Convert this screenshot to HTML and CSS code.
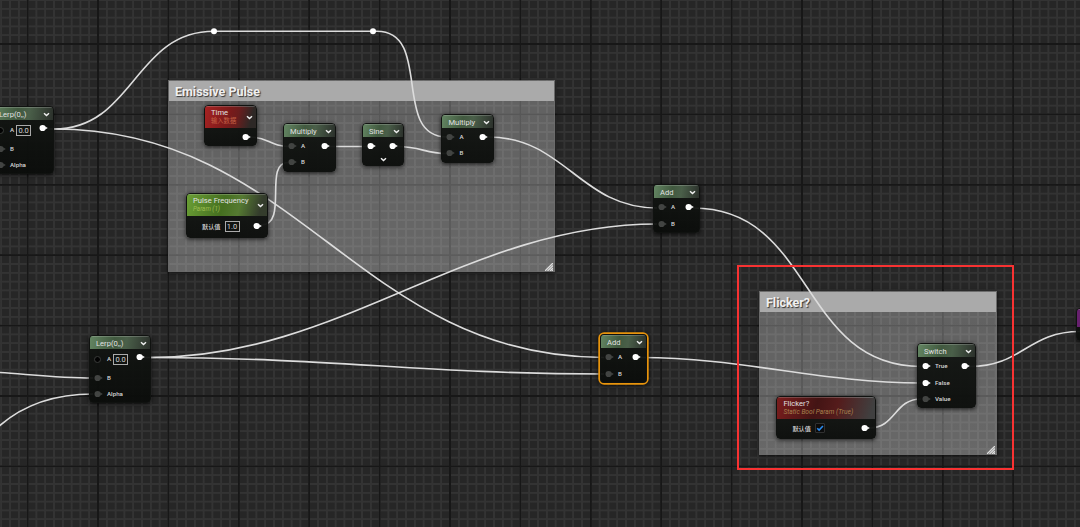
FILE: index.html
```html
<!DOCTYPE html>
<html lang="zh-CN">
<head>
    <meta charset="UTF-8">
    <meta name="viewport" content="width=device-width, initial-scale=1.0">
    <title>材质编辑器</title>
    <link rel="stylesheet" href="styles.css">
</head>
<body>
    <svg width="0" height="0" class="defs">
        <symbol id="pin" viewBox="0 0 10 8">
            <circle cx="3.6" cy="4" r="3.1"/>
            <path d="M6.2 2.4 8.8 4 6.2 5.6z"/>
        </symbol>
        <symbol id="chevron" viewBox="0 0 7 5">
            <path d="M1 1.2 3.5 3.5 6 1.2" fill="none" stroke="#eee" stroke-width="1.5"/>
        </symbol>
        <symbol id="grip" viewBox="0 0 8 8">
            <path d="M0 8 8 0M2.5 8 8 2.5M5 8 8 5M7 8 8 7" stroke="#ddd" stroke-width="1.3"/>
        </symbol>
    </svg>

    <div class="graph">
        <!-- 注释框 -->
        <section class="comment comment-pulse">
            <h2>Emissive Pulse</h2>
            <svg class="grip"><use href="#grip"/></svg>
        </section>
        <section class="comment comment-flicker">
            <h2>Flicker?</h2>
            <svg class="grip"><use href="#grip"/></svg>
        </section>

        <!-- 连线 -->
        <svg class="wires" width="1080" height="527">
            <path d="M48 129H54C134 129 134 31.3 214 31.3H377C433 31.3 391 137 447 137"/>
            <path d="M54 129C300 129 358 357.5 604 357.5"/>
            <path d="M144 357.5H151C341 357.5 467 224 657 224"/>
            <path d="M151 357.5C331 357.5 424 374 604 374"/>
            <path d="M0 372.5C30 374.5 60 378 93 378"/>
            <path d="M-5 430C25 401 62 394 93 394"/>
            <path d="M249 137C270 137 268 146.5 292 146.5"/>
            <path d="M261 225C289 225 263 162.5 288 162.5"/>
            <path d="M328 146.5H367"/>
            <path d="M397 146.5C422 146.5 424 153.5 447 153.5"/>
            <path d="M488 137C565 137 580 208 657 208"/>
            <path d="M693 208C815 208 799 366.5 921 366.5"/>
            <path d="M641 357.5C741 357.5 821 383 921 383"/>
            <path d="M869 428C896 428 894 399 921 399"/>
            <path d="M970 366.5C1022 366.5 1028 331.5 1080 331.5"/>
            <circle cx="214" cy="31.3" r="3"/>
            <circle cx="373" cy="31.3" r="3"/>
        </svg>

        <!-- 节点 -->
        <div class="node lerp lerp-top">
            <header><b>Lerp(0,,)</b><svg class="chevron"><use href="#chevron"/></svg></header>
            <div class="row"><i class="ring"></i><span>A</span><em>0.0</em><svg class="pin out"><use href="#pin"/></svg></div>
            <div class="row"><svg class="pin off"><use href="#pin"/></svg><span>B</span></div>
            <div class="row"><svg class="pin off"><use href="#pin"/></svg><span>Alpha</span></div>
        </div>

        <div class="node lerp lerp-bottom">
            <header><b>Lerp(0,,)</b><svg class="chevron"><use href="#chevron"/></svg></header>
            <div class="row"><i class="ring"></i><span>A</span><em>0.0</em><svg class="pin out"><use href="#pin"/></svg></div>
            <div class="row"><svg class="pin off"><use href="#pin"/></svg><span>B</span></div>
            <div class="row"><svg class="pin off"><use href="#pin"/></svg><span>Alpha</span></div>
        </div>

        <div class="node tall red time">
            <header><div><b>Time</b><small>输入数据</small></div><svg class="chevron"><use href="#chevron"/></svg></header>
            <div class="row"><svg class="pin out"><use href="#pin"/></svg></div>
        </div>

        <div class="node multiply-1">
            <header><b>Multiply</b><svg class="chevron"><use href="#chevron"/></svg></header>
            <div class="row"><svg class="pin off"><use href="#pin"/></svg><span>A</span><svg class="pin out"><use href="#pin"/></svg></div>
            <div class="row"><svg class="pin off"><use href="#pin"/></svg><span>B</span></div>
        </div>

        <div class="node sine">
            <header><b>Sine</b><svg class="chevron"><use href="#chevron"/></svg></header>
            <div class="row"><svg class="pin"><use href="#pin"/></svg><svg class="pin out"><use href="#pin"/></svg></div>
            <div class="expand"><svg class="chevron"><use href="#chevron"/></svg></div>
        </div>

        <div class="node multiply-2">
            <header><b>Multiply</b><svg class="chevron"><use href="#chevron"/></svg></header>
            <div class="row"><svg class="pin off"><use href="#pin"/></svg><span>A</span><svg class="pin out"><use href="#pin"/></svg></div>
            <div class="row"><svg class="pin off"><use href="#pin"/></svg><span>B</span></div>
        </div>

        <div class="node tall lime frequency">
            <header><div><b>Pulse Frequency</b><small>Param (1)</small></div><svg class="chevron"><use href="#chevron"/></svg></header>
            <div class="row value"><span>默认值</span><em>1.0</em><svg class="pin out"><use href="#pin"/></svg></div>
        </div>

        <div class="node add-1">
            <header><b>Add</b><svg class="chevron"><use href="#chevron"/></svg></header>
            <div class="row"><svg class="pin off"><use href="#pin"/></svg><span>A</span><svg class="pin out"><use href="#pin"/></svg></div>
            <div class="row"><svg class="pin off"><use href="#pin"/></svg><span>B</span></div>
        </div>

        <div class="node add-2 selected">
            <header><b>Add</b><svg class="chevron"><use href="#chevron"/></svg></header>
            <div class="row"><svg class="pin off"><use href="#pin"/></svg><span>A</span><svg class="pin out"><use href="#pin"/></svg></div>
            <div class="row"><svg class="pin off"><use href="#pin"/></svg><span>B</span></div>
        </div>

        <div class="node switch">
            <header><b>Switch</b><svg class="chevron"><use href="#chevron"/></svg></header>
            <div class="row"><svg class="pin"><use href="#pin"/></svg><span>True</span><svg class="pin out"><use href="#pin"/></svg></div>
            <div class="row"><svg class="pin"><use href="#pin"/></svg><span>False</span></div>
            <div class="row"><svg class="pin off"><use href="#pin"/></svg><span>Value</span></div>
        </div>

        <div class="node tall maroon flicker">
            <header><div><b>Flicker?</b><small>Static Bool Param (True)</small></div></header>
            <div class="row value">
                <span>默认值</span>
                <svg class="check" viewBox="0 0 9 9"><path d="M1.4 4.8 3.5 6.9 7.8 2.2"/></svg>
                <svg class="pin out"><use href="#pin"/></svg>
            </div>
        </div>

        <div class="node result"><header></header></div>

        <div class="highlight"></div>
    </div>
</body>
</html>
```

FILE: styles.css
```css
body {
    margin: 0;
    background: #262626;
    font-family: Roboto, 'Noto Sans CJK SC', sans-serif;
    overflow: hidden;
}

.defs {
    position: absolute;
}

.graph {
    position: relative;
    width: 1080px;
    height: 527px;
    overflow: hidden;
    background-color: #262626;
    background-image:
        repeating-linear-gradient(90deg, #171717 0, #171717 1.2px, transparent 1.8px, transparent 69.8px, #171717 70.4px),
        repeating-linear-gradient(180deg, #171717 0, #171717 1.2px, transparent 1.8px, transparent 69.8px, #171717 70.4px),
        repeating-linear-gradient(90deg, #333 0, #333 1.2px, transparent 1.9px, transparent 8.1px, #333 8.8px),
        repeating-linear-gradient(180deg, #333 0, #333 1.2px, transparent 1.9px, transparent 8.1px, #333 8.8px);
    background-size: 1200px 700px;
    background-position: -43.4px -27px;
}

.comment {
    position: absolute;
    box-sizing: border-box;
    background: linear-gradient(rgba(255, 255, 255, 0.27), rgba(255, 255, 255, 0.3));
    border: 1px solid rgba(110, 110, 110, 0.6);
    box-shadow: 0 1px 4px rgba(0, 0, 0, 0.7);
}

.comment h2 {
    margin: 0;
    height: 20px;
    padding-left: 6px;
    background: #aaa;
    color: #f0f0f0;
    font-size: 12.5px;
    font-weight: 700;
    line-height: 22px;
    text-shadow: 1px 1px 1px #333;
}

.comment-pulse {
    left: 168px;
    top: 80px;
    width: 387px;
    height: 192px;
}

.comment-flicker {
    left: 759px;
    top: 291px;
    width: 238px;
    height: 164px;
}

.grip {
    position: absolute;
    right: 1px;
    bottom: 0;
    width: 8px;
    height: 8px;
}

.wires {
    position: absolute;
    left: 0;
    top: 0;
}

.wires path {
    fill: none;
    stroke: #dcdcdc;
    stroke-width: 1.6;
}

.wires circle {
    fill: #fff;
}

.node {
    position: absolute;
    box-sizing: border-box;
    border-radius: 4px;
    background: linear-gradient(rgba(18, 21, 18, 0.94), rgba(10, 12, 10, 0.94));
    border: 1px solid #101210;
    box-shadow: 0 1px 4px rgba(0, 0, 0, 0.75);
    color: #d6d6d6;
    overflow: hidden;
}

.node header {
    display: flex;
    align-items: center;
    justify-content: space-between;
    box-sizing: border-box;
    height: 13px;
    margin-bottom: 1px;
    padding: 0 3px 0 6px;
    border-top: 1px solid rgba(255, 255, 255, 0.2);
    background: linear-gradient(100deg, #638562 0%, #41593f 40%, #4a5f49 60%, #2b302b 100%);
}

.node b {
    display: block;
    font-size: 7.6px;
    font-weight: 400;
    line-height: 9px;
    color: #e0e0e0;
    white-space: nowrap;
}

.node small {
    display: block;
    font-size: 6.3px;
    line-height: 9px;
    white-space: nowrap;
}

.chevron {
    width: 7px;
    height: 5px;
    flex: none;
}

.row {
    display: flex;
    align-items: center;
    height: 16.2px;
    padding: 0 4px 0 4px;
}

.row span {
    margin-left: 3px;
    font-size: 6.2px;
    font-weight: 500;
}

.row em {
    box-sizing: border-box;
    width: 15px;
    height: 11px;
    margin-left: 4px;
    border: 1px solid #aaa;
    font-size: 7.5px;
    font-style: normal;
    line-height: 10px;
    text-align: center;
}

.pin {
    width: 10px;
    height: 8px;
    flex: none;
    fill: #fff;
}

.pin.off {
    fill: #424442;
}

.pin.out {
    margin-left: auto;
}

.ring {
    box-sizing: border-box;
    width: 7px;
    height: 7px;
    margin-right: 3px;
    border: 1px solid #3a3c3a;
    border-radius: 50%;
    background: #020202;
}

.expand {
    display: flex;
    justify-content: center;
    margin-top: 3px;
}

.tall header {
    height: 22px;
    align-items: center;
}

.tall header > div {
    margin-top: -1px;
}

.red header {
    background: linear-gradient(105deg, #a62222 0%, #7c1a1a 45%, #6a1d1d 62%, #2d2826 88%);
}

.red small {
    color: #c46045;
}

.lime header {
    background: linear-gradient(105deg, #6a9e35 0%, #456f20 45%, #557a32 65%, #343c2c 90%);
}

.lime small {
    color: #9cbc50;
    font-style: italic;
}

.maroon header {
    background: linear-gradient(105deg, #7a1d1d 0%, #431414 40%, #541b1b 60%, #404040 95%);
}

.maroon small {
    color: #a8804e;
    font-size: 6.6px;
    font-style: italic;
}

.lerp {
    width: 62px;
    height: 68px;
}

.lerp .out {
    margin-top: -4px;
}

.lerp em {
    margin-left: 2px;
}

.lerp .row:nth-child(2) {
    height: 20px;
    margin-top: -1px;
    margin-bottom: 1px;
}

.lerp-top {
    left: -8px;
    top: 106px;
}

.lerp-bottom {
    left: 89px;
    top: 335px;
}

.time {
    left: 204px;
    top: 105px;
    width: 53px;
    height: 41px;
}

.multiply-1 {
    left: 283px;
    top: 123px;
    width: 53px;
    height: 49px;
}

.sine {
    left: 362px;
    top: 123px;
    width: 42px;
    height: 43px;
}

.multiply-2 {
    left: 441.4px;
    top: 114px;
    width: 53px;
    height: 49px;
}

.frequency {
    left: 186px;
    top: 193.4px;
    width: 82px;
    height: 45px;
}

.add-1 {
    left: 653px;
    top: 184.4px;
    width: 47px;
    height: 49px;
}

.add-2 {
    left: 600px;
    top: 334.4px;
    width: 47px;
    height: 49px;
}

.selected {
    box-shadow: 0 0 0 1.7px #e8940c, 0 1px 5px 2px rgba(0, 0, 0, 0.7);
}

.switch {
    left: 917px;
    top: 343.4px;
    width: 59px;
    height: 65px;
}

.flicker {
    left: 776.4px;
    top: 396.4px;
    width: 100px;
    height: 43px;
}

.value {
    height: 18px;
    padding-left: 12px;
}

.flicker .value {
    height: 16px;
}

.check {
    width: 8px;
    height: 8px;
    margin-left: 4px;
    background: #0c0c0c;
    border: 1px solid #303030;
    border-radius: 1px;
}

.check path {
    fill: none;
    stroke: #2a8cf0;
    stroke-width: 1.7;
}

.result {
    left: 1076px;
    top: 308px;
    width: 60px;
    height: 33px;
}

.result header {
    height: 18px;
    background: #67206e;
}

/* 红色标注框 */
.highlight {
    position: absolute;
    box-sizing: border-box;
    left: 737px;
    top: 265px;
    width: 277px;
    height: 205px;
    border: 2px solid #f83232;
}
```
